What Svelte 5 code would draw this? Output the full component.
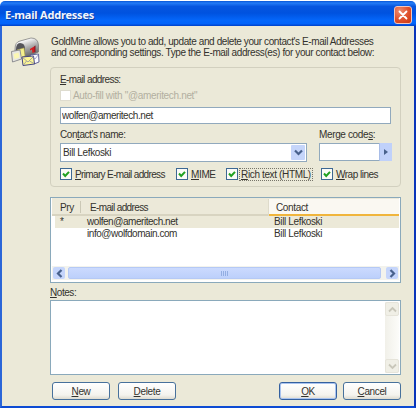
<script lang="ts">
  interface Address {
    primary: boolean;
    email: string;
    contact: string;
  }

  interface Option {
    key: string;
    rest: string;
    name: string;
    focused?: boolean;
  }

  let email = $state('wolfen@ameritech.net');
  let contact = $state('Bill Lefkoski');
  let selected = $state(0);

  const addresses: Address[] = [
    { primary: true, email: 'wolfen@ameritech.net', contact: 'Bill Lefkoski' },
    { primary: false, email: 'info@wolfdomain.com', contact: 'Bill Lefkoski' }
  ];

  const options: Option[] = [
    { key: 'P', rest: 'rimary E-mail address', name: 'primary' },
    { key: 'M', rest: 'IME', name: 'mime' },
    { key: 'R', rest: 'ich text (HTML)', name: 'rich', focused: true },
    { key: 'W', rest: 'rap lines', name: 'wrap' }
  ];

  let checked: Record<string, boolean> = $state({ primary: true, mime: true, rich: true, wrap: true });
</script>

{#snippet chevron(dir: string)}
  <svg class="chevron {dir}" viewBox="0 0 9 9" width="9" height="9">
    <path d="M1 2.5 L4.5 6 L8 2.5" />
  </svg>
{/snippet}

<div class="window">
  <header class="titlebar">
    <h1>E-mail Addresses</h1>
    <button class="close" aria-label="Close">
      <svg viewBox="0 0 18 18" width="18" height="18">
        <path d="M5.500 5.500 L12.500 12.500 M12.500 5.500 L5.500 12.500" />
      </svg>
    </button>
  </header>

  <div class="body">
    <!-- Mailbox with envelopes -->
    <svg class="mailbox" viewBox="0 0 30 30" width="30" height="30">
      <defs>
        <linearGradient id="metal" x1="0" y1="0" x2="0.4" y2="1">
          <stop offset="0" stop-color="#777" />
          <stop offset="0.25" stop-color="#f6f6f6" />
          <stop offset="0.6" stop-color="#aaa" />
          <stop offset="1" stop-color="#666" />
        </linearGradient>
      </defs>
      <path d="M5 12 Q5 5 10 4 L21 1 Q28 1 28.500 8 L28.500 15 L15 21 L5 18 Z" fill="url(#metal)" stroke="#777" stroke-width="0.7" />
      <path d="M6 13 Q6 6 10 6 Q15 6 15 12 L15 20 L6 18 Z" fill="#55555a" />
      <path d="M20 12 L25 9 L25 15 L22.500 16 L22 12.500 L20 13.500 Z" fill="#d51b1e" />
      <path d="M24.500 9 L25.500 8.500 L25.500 15 L24.500 15.500 Z" fill="#741a2a" />
      <path d="M7 13 L14 11 L15 19 L8 22 Z" fill="#f4ef8d" stroke="#b5ad54" stroke-width="0.6" />
      <path d="M1.500 14.500 L10 13 L11.500 22 L2.500 25 Z" fill="#e7e7e2" stroke="#85858a" stroke-width="0.9" />
      <path d="M3.500 17 L8.500 15.500 L9.500 20.500 L4.500 22 Z" fill="#fbf7b4" />
      <path d="M20 18 L28.500 17 L29 25 L24 27 Z" fill="#fafaff" stroke="#555690" stroke-width="0.9" />
      <path d="M12 20 L23.500 19 L24.500 27 L13 28.500 Z" fill="#fcf594" stroke="#454683" stroke-width="1" />
      <path d="M12.500 20.500 L18 25 L23.500 19.500 M13.500 28 L16.500 24 M24 26.500 L19.500 24" fill="none" stroke="#8586a0" stroke-width="0.7" />
      <path d="M21 19 L25 22 L28.500 17.500" fill="none" stroke="#8585b1" stroke-width="0.7" />
    </svg>

    <main>
      <p class="intro">
        <span class="line1">GoldMine allows you to add, update and delete your contact's E-mail Addresses</span>
        <span class="line2">and corresponding settings. Type the E-mail address(es) for your contact below:</span>
      </p>

      <section class="group">
        <label class="email-label" for="email"><u>E</u>-mail address:</label>
        <div class="autofill">
          <span class="box disabled"></span>
          <span>Auto-fill with "@ameritech.net"</span>
        </div>
        <input id="email" class="field email" type="text" spellcheck="false" bind:value={email} />

        <div class="names">
          <div class="contact">
            <label for="contact">Con<u>t</u>act's name:</label>
            <div class="combo">
              <input id="contact" type="text" spellcheck="false" bind:value={contact} />
              <button class="drop" aria-label="Choose contact">{@render chevron('down')}</button>
            </div>
          </div>
          <div class="merge">
            <label for="merge">Merge code<u>s</u>:</label>
            <div class="codes">
              <input id="merge" type="text" />
              <button class="pick" aria-label="Choose merge code"><i></i></button>
            </div>
          </div>
        </div>

        <div class="options">
          {#each options as option (option.name)}
            <button
              class="option {option.name}"
              role="checkbox"
              aria-checked={checked[option.name]}
              onclick={() => (checked[option.name] = !checked[option.name])}
            >
              <span class="box">
                {#if checked[option.name]}
                  <svg viewBox="0 0 10 10" width="10" height="10"><path d="M2 4.500 L4.200 7 L8 2.800" /></svg>
                {/if}
              </span>
              <span class="caption" class:focused={option.focused}><u>{option.key}</u>{option.rest}</span>
            </button>
          {/each}
        </div>
      </section>

      <section class="list">
        <div class="head">
          <span class="pry">Pry</span>
          <span class="address">E-mail address</span>
          <span class="who">Contact</span>
        </div>
        <div class="rows">
          {#each addresses as address, i}
            <button class="row" class:selected={selected === i} onclick={() => (selected = i)}>
              <span class="mark">{address.primary ? '*' : ''}</span>
              <span class="mail">{address.email}</span>
              <span class="name">{address.contact}</span>
            </button>
          {/each}
        </div>
        <div class="hscroll">
          <span class="arrow">{@render chevron('left')}</span>
          <span class="thumb"><i></i><i></i><i></i><i></i></span>
          <span class="arrow">{@render chevron('right')}</span>
        </div>
      </section>

      <label class="notes-label" for="notes"><u>N</u>otes:</label>
      <div class="notes">
        <textarea id="notes"></textarea>
        <div class="vscroll">
          <span>{@render chevron('up')}</span>
          <span>{@render chevron('down')}</span>
        </div>
      </div>

      <footer>
        <button class="btn"><span><u>N</u>ew</span></button>
        <button class="btn"><span><u>D</u>elete</span></button>
        <button class="btn default"><span><u>O</u>K</span></button>
        <button class="btn"><span><u>C</u>ancel</span></button>
      </footer>
    </main>
  </div>
</div>

<style>
  :global(body) {
    background: #fff;
    overflow: hidden;
  }

  .window,
  .window * {
    box-sizing: border-box;
  }

  .window {
    width: 416px;
    height: 408px;
    padding-top: 1px;
    display: flex;
    flex-direction: column;
    font: 10px/11px 'Liberation Sans', Arial, sans-serif;
    letter-spacing: -0.36px;
    color: #33322d;
  }

  button,
  input,
  textarea {
    font: inherit;
    letter-spacing: inherit;
    color: inherit;
    margin: 0;
    padding: 0;
    border: 0;
    background: none;
    outline: none;
  }

  label {
    display: block;
  }

  u {
    text-decoration: underline;
    text-underline-offset: 1px;
    text-decoration-thickness: 1px;
    text-decoration-skip-ink: none;
  }

  .titlebar {
    flex: none;
    height: 25px;
    display: flex;
    align-items: center;
    justify-content: space-between;
    padding: 3px 4px 0 5px;
    border-radius: 5px 5px 0 0;
    background: linear-gradient(#0754d5 0, #247cf7 8%, #0756df 22%, #0052df 48%, #0467fb 78%, #0264fa 90%, #0041c8 100%);
  }

  h1 {
    margin: 0;
    font: bold 11px/14px 'Noto Sans', sans-serif;
    letter-spacing: -0.2px;
    color: #f1f5ff;
    text-shadow: 1px 1px #0b3a9d;
  }

  .close {
    width: 18px;
    height: 18px;
    border: 1px solid #f3c4bb;
    border-radius: 3px;
    display: flex;
    align-items: center;
    justify-content: center;
    background: radial-gradient(circle at 30% 25%, #ee8c70, #df4f2b 55%, #c8370f);
  }

  .close svg {
    flex: none;
  }

  .close path {
    stroke: #fff;
    stroke-width: 1.8;
    stroke-linecap: round;
  }

  .body {
    flex: 1;
    display: flex;
    border: solid #0d4bd3;
    border-width: 0 2px 2px;
    border-left-color: #2b66d8;
    border-right-color: #0a35bb;
    background: #ebe9d8;
    padding: 10px 13px 0 8px;
  }

  .mailbox {
    flex: none;
    margin-top: 1px;
    margin-right: 10px;
  }

  main {
    width: 351px;
    flex: none;
  }

  .intro {
    margin: 0 0 9px 1px;
    height: 22px;
    white-space: nowrap;
  }

  .intro span {
    display: block;
  }

  .line1 {
    letter-spacing: -0.4px;
  }

  .line2 {
    letter-spacing: -0.39px;
  }

  .group {
    height: 120px;
    border: 1px solid #d2d0bf;
    border-radius: 4px;
    padding: 6px 0 0 9px;
  }

  .email-label {
    height: 16px;
    letter-spacing: -0.6px;
  }

  .autofill {
    display: flex;
    gap: 2px;
    height: 17px;
    letter-spacing: -0.33px;
    color: #b2afa0;
  }

  .box {
    flex: none;
    width: 12px;
    height: 12px;
    border: 1px solid #3d6893;
    background: #fbfbf8;
    display: flex;
    align-items: center;
    justify-content: center;
  }

  .box.disabled {
    width: 11px;
    height: 11px;
    border-color: #dedccf;
    background: #fff;
  }

  .box svg {
    flex: none;
  }

  .box path {
    fill: none;
    stroke: #21a121;
    stroke-width: 2;
  }

  .field,
  .combo,
  .codes {
    border: 1px solid #91a9bd;
    background: #fff;
  }

  .email {
    display: block;
    width: 331px;
    height: 17px;
    padding: 0 1px 1px;
    letter-spacing: -0.44px;
  }

  .names {
    display: flex;
    gap: 12px;
    margin-top: 5px;
  }

  .names label {
    height: 14px;
  }

  .contact {
    width: 247px;
  }

  .contact label {
    letter-spacing: -0.43px;
  }

  .combo {
    display: flex;
    height: 19px;
    padding: 1px 1px 1px 2px;
  }

  .combo input {
    flex: 1;
    min-width: 0;
  }

  .drop {
    width: 14px;
    background: #c5d5fa;
    border-radius: 1px;
    display: flex;
    align-items: center;
    justify-content: center;
  }

  .chevron {
    flex: none;
    display: block;
  }

  .chevron path {
    fill: none;
    stroke: #48618c;
    stroke-width: 2.2;
  }

  .chevron.left {
    transform: rotate(90deg);
  }

  .chevron.right {
    transform: rotate(-90deg);
  }

  .chevron.up {
    transform: rotate(180deg);
  }

  .codes {
    display: flex;
    width: 73px;
    height: 18px;
    border-right: 0;
  }

  .codes input {
    flex: 1;
    min-width: 0;
  }

  .pick {
    width: 13px;
    margin: -1px 0;
    background: #c0d1fa;
    border-left: 1px solid #a8bde8;
    display: flex;
    align-items: center;
    justify-content: center;
  }

  .pick i {
    border: solid transparent;
    border-width: 3.5px 0 3.5px 4px;
    border-left-color: #48618c;
  }

  .options {
    display: flex;
    margin-top: 5px;
    height: 14px;
    white-space: nowrap;
  }

  .option {
    display: flex;
    align-items: center;
    gap: 2px;
    height: 14px;
    text-align: left;
  }

  .primary {
    width: 116px;
    letter-spacing: -0.64px;
  }

  .mime {
    width: 50px;
  }

  .rich {
    width: 95px;
  }

  .wrap {
    letter-spacing: -0.5px;
  }

  .caption {
    padding: 0 1px;
  }

  .focused {
    outline: 1px dotted #77756a;
  }

  .list {
    margin-top: 10px;
    height: 86px;
    border: 1px solid #8aa9bb;
    background: #fff;
    display: flex;
    flex-direction: column;
    padding: 0 1px 2px;
  }

  .head {
    display: flex;
    height: 18px;
    padding-top: 1px;
    line-height: 17px;
    background: #ece9d9;
    border-bottom: 2px solid #d8d4c1;
  }

  .head span {
    height: 17px;
  }

  .pry {
    width: 29px;
    padding-left: 8px;
    border-right: 1px solid #cbc8b6;
    margin: 2px 0;
    line-height: 13px;
  }

  .head .pry {
    height: 12px;
  }

  .address {
    width: 188px;
    padding-left: 9px;
    border-right: 1px solid #dedbcb;
    letter-spacing: -0.63px;
  }

  .who {
    flex: 1;
    padding-left: 7px;
    background: #faf8f2;
    border-bottom: 2px solid #f0b53c;
  }

  .rows {
    flex: 1;
    padding: 0 0 0 3px;
  }

  .row {
    display: flex;
    width: 100%;
    height: 12px;
    line-height: 12px;
    text-align: left;
  }

  .row.selected {
    background: #ece9d8;
  }

  .mark {
    width: 32px;
    padding-left: 5px;
  }

  .mail {
    width: 187px;
    letter-spacing: -0.45px;
  }

  .hscroll {
    display: flex;
    gap: 3px;
    height: 14px;
    background: #f3f3ed;
    padding: 1px;
  }

  .arrow {
    width: 12px;
    border-radius: 2px;
    background: #c5d5fb;
    display: flex;
    align-items: center;
    justify-content: center;
  }

  .arrow:last-child {
    margin-left: 2px;
  }

  .thumb {
    flex: 1;
    border: 1px solid #b5c9f5;
    border-radius: 2px;
    background: linear-gradient(#cbdafe, #bcd0fb);
    display: flex;
    align-items: center;
    justify-content: center;
    gap: 1px;
  }

  .thumb i {
    width: 1px;
    height: 5px;
    background: #93aee2;
  }

  .notes-label {
    margin-top: 4px;
    height: 13px;
    letter-spacing: -0.45px;
  }

  .notes {
    height: 75px;
    border: 1px solid #8aa9bb;
    background: #fff;
    display: flex;
    padding: 1px;
  }

  textarea {
    flex: 1;
    resize: none;
  }

  .vscroll {
    width: 14px;
    background: linear-gradient(90deg, #f1f0e9, #fcfcf9);
    display: flex;
    flex-direction: column;
    justify-content: space-between;
  }

  .vscroll span {
    height: 14px;
    border: 1px solid #e6e4da;
    border-radius: 2px;
    background: #f0efe6;
    display: flex;
    align-items: center;
    justify-content: center;
  }

  .vscroll .chevron path {
    stroke: #c9c7ba;
    stroke-width: 1.8;
  }

  footer {
    display: flex;
    margin-top: 7px;
    padding-left: 2px;
    gap: 8px;
  }

  .btn {
    width: 58px;
    height: 18px;
    border: 1px solid #47719c;
    border-radius: 3px;
    background: linear-gradient(#fff, #f4f3ee 75%, #dedbd0);
    text-align: center;
  }

  .default {
    margin-left: auto;
    margin-right: -2px;
    border-color: #33609f;
    box-shadow: inset 0 0 0 1px #a9c3ef;
  }
</style>
